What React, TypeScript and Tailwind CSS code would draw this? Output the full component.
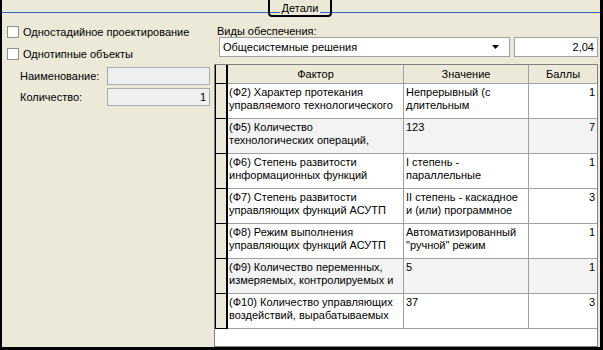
import React from "react";

type Row = { f: string[]; v: string[]; b: string; gray?: boolean };

const rows: Row[] = [
  { f: ["(Ф2) Характер протекания", "управляемого технологического"], v: ["Непрерывный (с", "длительным"], b: "1" },
  { f: ["(Ф5) Количество", "технологических операций,"], v: ["123"], b: "7", gray: true },
  { f: ["(Ф6) Степень развитости", "информационных функций"], v: ["I степень -", "параллельные"], b: "1" },
  { f: ["(Ф7) Степень развитости", "управляющих функций АСУТП"], v: ["II степень - каскадное", "и (или) программное"], b: "3" },
  { f: ["(Ф8) Режим выполнения", "управляющих функций АСУТП"], v: ["Автоматизированный", "\"ручной\" режим"], b: "1" },
  { f: ["(Ф9) Количество переменных,", "измеряемых, контролируемых и"], v: ["5"], b: "1", gray: true },
  { f: ["(Ф10) Количество управляющих", "воздействий, вырабатываемых"], v: ["37"], b: "3" },
];

function Checkbox({ label }: { label: string }) {
  return (
    <div className="flex items-center gap-[4px] h-[12px]">
      <div className="w-[12px] h-[12px] bg-white border border-[#8f8f8f] shrink-0" />
      <span className="whitespace-nowrap">{label}</span>
    </div>
  );
}

export default function App() {
  return (
    <div className="w-[603px] h-[350px] bg-black pl-[2px] pr-[3px] pb-[3px] flex font-['Liberation_Sans',Arial,sans-serif] text-[11px] leading-[13px] text-black">
      <div className="relative flex-1 bg-[#ECE9D8] flex flex-col overflow-hidden">
        <div className="h-[12px] shrink-0" />
        <div className="h-px bg-[#316AC5] shrink-0" />
        <div className="absolute left-[266px] top-[-8px] w-[64px] h-[25px] border-2 border-black rounded-[4px] flex items-end justify-center">
          <span className="bg-[#ECE9D8] px-[2px]">Детали</span>
        </div>
        <div className="flex flex-1 min-h-0">
          {/* left panel */}
          <div className="w-[212px] shrink-0 flex flex-col pl-[5px]">
            <div className="mt-[13px]">
              <Checkbox label="Одностадийное проектирование" />
            </div>
            <div className="mt-[10px]">
              <Checkbox label="Однотипные объекты" />
            </div>
            <div className="mt-[7px] pl-[13px] flex items-center">
              <span className="w-[87px] shrink-0">Наименование:</span>
              <div className="w-[103px] h-[18px] bg-[#EFEFEF] border border-[#ABABAB]" />
            </div>
            <div className="mt-[3px] pl-[13px] flex items-center">
              <span className="w-[87px] shrink-0">Количество:</span>
              <div className="w-[103px] h-[18px] bg-[#EFEFEF] border border-[#ABABAB] flex items-center justify-end pr-[3px]">
                1
              </div>
            </div>
          </div>
          {/* right panel */}
          <div className="flex-1 flex flex-col min-w-0">
            <div className="mt-[12px] pl-[3px] leading-[12px] h-[12px]">Виды обеспечения:</div>
            <div className="flex h-[20px] gap-[4px] pl-[5px]">
              <div className="w-[291px] bg-white border border-[#A0A0A0] flex items-center justify-between pl-[3px] pr-[10px]">
                <span>Общесистемные решения</span>
                <svg width="7" height="4" viewBox="0 0 7 4">
                  <path d="M0 0 H7 L3.5 4 Z" fill="black" />
                </svg>
              </div>
              <div className="w-[84px] bg-white border border-[#A0A0A0] flex items-center justify-end pr-[3px]">2,04</div>
            </div>
            <div className="mt-[7px] w-[384px] flex-1 border border-[#808080] bg-white flex flex-col overflow-hidden">
              <div className="grid grid-cols-[13px_176px_125px_68px] h-[19px] shrink-0">
                <div className="bg-[#ECE9D8] border-l border-black border-r-2 border-b" />
                <div className="bg-[#ECE9D8] border-r border-b border-[#A0A0A0] flex items-center justify-center">Фактор</div>
                <div className="bg-[#ECE9D8] border-r border-b border-[#A0A0A0] flex items-center justify-center">Значение</div>
                <div className="bg-[#ECE9D8] border-b border-[#A0A0A0] flex items-center justify-center">Баллы</div>
              </div>
              {rows.map((r, i) => (
                <div key={i} className="grid grid-cols-[13px_176px_125px_68px] h-[35px] shrink-0">
                  <div className="bg-[#ECE9D8] border-l border-black border-r-2 border-b" />
                  <div className={`border-r border-b border-[#A0A0A0] pl-[1px] pt-[2px] overflow-hidden whitespace-nowrap ${r.gray ? "bg-[#F3F3F3]" : "bg-white"}`}>
                    {r.f.map((t, j) => (
                      <div key={j}>{t}</div>
                    ))}
                  </div>
                  <div className={`border-r border-b border-[#A0A0A0] pl-[2px] pt-[2px] overflow-hidden whitespace-nowrap ${r.gray ? "bg-[#F3F3F3]" : "bg-white"}`}>
                    {r.v.map((t, j) => (
                      <div key={j}>{t}</div>
                    ))}
                  </div>
                  <div className={`border-b border-[#A0A0A0] pr-[2px] pt-[2px] text-right ${r.gray ? "bg-[#F3F3F3]" : "bg-white"}`}>{r.b}</div>
                </div>
              ))}
            </div>
          </div>
        </div>
      </div>
    </div>
  );
}
